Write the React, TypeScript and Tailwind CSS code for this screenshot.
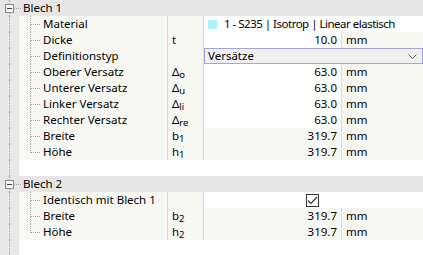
import React from "react";

type RowProps = {
    name: string
    sym?: React.ReactNode
    value?: React.ReactNode
    unit?: string
    last?: boolean
    editable?: boolean
}

const Gutter = () => (
    <div className="w-[19px] shrink-0 self-stretch bg-[#e8e8e8]">
        <div className="ml-[9px] h-full border-l border-dotted border-[#a8a8a8]" />
    </div>
)

const Sym = ({ base, sub }: { base: string; sub: string }) => (
    <span>
        {base}
        <span className="text-[9.5px] align-[-2px]">{sub}</span>
    </span>
)

const Tree = ({ last }: { last?: boolean }) => (
    <div className="flex w-[24px] shrink-0 bg-[#f8f8f3]">
        <div className="ml-[11px] flex w-[10px] flex-col">
            <div className="h-[9px] border-b border-l border-dotted border-[#a8a8a8]" />
            {!last && <div className="flex-1 border-l border-dotted border-[#a8a8a8]" />}
        </div>
    </div>
)

const Header = ({ title }: { title: string }) => (
    <div className="flex h-[16px] bg-[#e6e6e6]">
        <div className="ml-[5px] flex w-[9px] flex-col">
            <div className="ml-[4px] h-[4px] border-l border-dotted border-[#a8a8a8]" />
            <div className="flex h-[9px] w-[9px] items-center justify-center border border-[#8c8c8c] bg-[#f4f4f4]">
                <div className="h-px w-[5px] bg-[#444]" />
            </div>
            <div className="ml-[4px] flex-1 border-l border-dotted border-[#a8a8a8]" />
        </div>
        <div className="mt-[8px] h-px w-[7px] border-t border-dotted border-[#a8a8a8]" />
        <div className="ml-[2px] leading-[16px] text-black">{title}</div>
    </div>
)

const Row = ({ name, sym, value, unit, last, editable }: RowProps) => (
    <div className="flex h-[16px] leading-[16px]">
        <Gutter />
        <Tree last={last} />
        <div className="w-[124px] shrink-0 whitespace-nowrap bg-[#f8f8f3] text-black">{name}</div>
        <div className="w-px shrink-0 bg-[#dadada]" />
        <div className="w-[35px] shrink-0 whitespace-nowrap bg-[#f8f8f3] pl-[4px] text-black">{sym}</div>
        <div className="w-px shrink-0 bg-[#dadada]" />
        <div className={`w-[137px] shrink-0 pr-[4px] text-right text-black ${editable ? "bg-white" : "bg-[#f8f8f3]"}`}>{value}</div>
        <div className="w-px shrink-0 bg-[#dadada]" />
        <div className="flex-1 bg-[#f8f8f3] pl-[4px] text-black">{unit}</div>
    </div>
)

const WideRow = ({ name, last, children }: { name: string; last?: boolean; children: React.ReactNode }) => (
    <div className="flex h-[16px] leading-[16px]">
        <Gutter />
        <Tree last={last} />
        <div className="w-[124px] shrink-0 whitespace-nowrap bg-[#f8f8f3] text-black">{name}</div>
        <div className="w-px shrink-0 bg-[#dadada]" />
        <div className="w-[35px] shrink-0 bg-[#f8f8f3]" />
        <div className="w-px shrink-0 bg-[#dadada]" />
        <div className="flex flex-1 items-center bg-white">{children}</div>
    </div>
)

const Spacer = ({ grow }: { grow?: boolean }) => (
    <div className={`flex ${grow ? "flex-1" : "h-[16px]"}`}>
        <Gutter />
        <div className="flex-1 bg-white" />
    </div>
)

export default function App() {
    return (
        <div className="flex h-[255px] w-[423px] flex-col overflow-hidden bg-white text-[11.5px]" style={{ fontFamily: '"Noto Sans", "Open Sans", sans-serif' }}>
            <Header title="Blech 1" />
            <WideRow name="Material">
                <div className="ml-[4px] h-[9px] w-[9px] bg-[#a8f2f8]" />
                <span className="ml-[7px] whitespace-nowrap tracking-[-0.5px] text-black">1 - S235 | Isotrop | Linear elastisch</span>
            </WideRow>
            <Row name="Dicke" sym="t" value="10.0" unit="mm" editable />
            <WideRow name="Definitionstyp">
                <div className="flex h-full flex-1 items-center justify-between border border-[#a4a4e4] bg-[#f0f0f0] pl-[3px] pr-[5px]">
                    <span className="text-black">Versätze</span>
                    <svg width="9" height="5" viewBox="0 0 9 5">
                        <path d="M0.5 0.5 L4.5 4.5 L8.5 0.5" fill="none" stroke="#606060" strokeWidth="1" />
                    </svg>
                </div>
            </WideRow>
            <Row name="Oberer Versatz" sym={<Sym base="Δ" sub="o" />} value="63.0" unit="mm" editable />
            <Row name="Unterer Versatz" sym={<Sym base="Δ" sub="u" />} value="63.0" unit="mm" editable />
            <Row name="Linker Versatz" sym={<Sym base="Δ" sub="li" />} value="63.0" unit="mm" editable />
            <Row name="Rechter Versatz" sym={<Sym base="Δ" sub="re" />} value="63.0" unit="mm" editable />
            <Row name="Breite" sym={<Sym base="b" sub="1" />} value="319.7" unit="mm" />
            <Row name="Höhe" sym={<Sym base="h" sub="1" />} value="319.7" unit="mm" last />
            <Spacer />
            <Header title="Blech 2" />
            <WideRow name="Identisch mit Blech 1">
                <div className="ml-[102px] flex h-[13px] w-[13px] items-center justify-center border border-[#333]">
                    <svg width="11" height="9" viewBox="0 0 11 9">
                        <path d="M1 4.5 L4 7.5 L10 1" fill="none" stroke="#333" strokeWidth="1.2" />
                    </svg>
                </div>
            </WideRow>
            <Row name="Breite" sym={<Sym base="b" sub="2" />} value="319.7" unit="mm" />
            <Row name="Höhe" sym={<Sym base="h" sub="2" />} value="319.7" unit="mm" last />
            <Spacer grow />
        </div>
    )
}
